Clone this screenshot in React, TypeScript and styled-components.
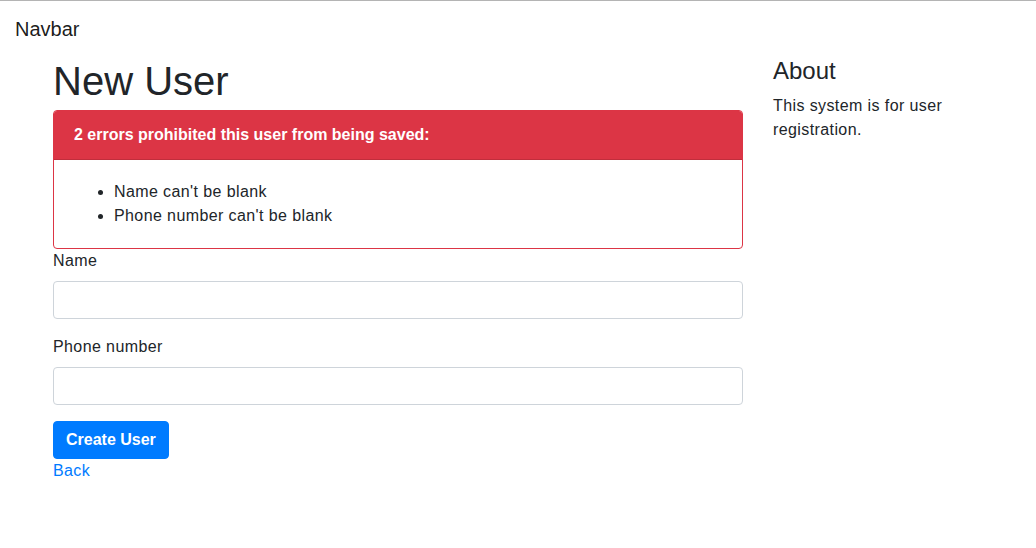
import styled, { createGlobalStyle } from 'styled-components';

const GlobalStyle = createGlobalStyle`
  *, *::before, *::after {
    box-sizing: border-box;
  }

  body {
    margin: 0;
    font-family: "Liberation Sans", Arial, sans-serif;
    font-size: 16px;
    line-height: 1.5;
    letter-spacing: 0.4px;
    color: #212529;
    background: #fff;
    border-top: 1px solid #b4b4b4;
  }
`;

const StyledNavbar = styled.nav`
  display: flex;
  align-items: center;
  padding: 8px 15px;
`;

const StyledBrand = styled.a`
  font-size: 20px;
  line-height: 30px;
  letter-spacing: 0;
  padding: 5px 0;
  color: rgba(0, 0, 0, 0.9);
  text-decoration: none;
`;

const StyledContainer = styled.main`
  max-width: 960px;
  margin: 0 auto;
  padding: 0 15px;
`;

const StyledRow = styled.div`
  display: flex;
  gap: 30px;
`;

const StyledMainColumn = styled.section`
  flex: 0 0 690px;
`;

const StyledSideColumn = styled.aside`
  flex: 0 0 210px;
`;

const StyledTitle = styled.h1`
  font-size: 40px;
  font-weight: 400;
  line-height: 1.2;
  letter-spacing: 0;
  margin: 0 0 5px;
`;

const StyledErrorCard = styled.div`
  border: 1px solid #dc3545;
  border-radius: 4px;
  overflow: hidden;
`;

const StyledErrorHeader = styled.h2`
  margin: 0;
  padding: 12px 20px;
  font-size: 16px;
  font-weight: 700;
  line-height: 24px;
  letter-spacing: 0;
  color: #fff;
  background: #dc3545;
  border-bottom: 1px solid rgba(0, 0, 0, 0.125);
`;

const StyledErrorBody = styled.div`
  padding: 20px;
`;

const StyledErrorList = styled.ul`
  margin: 0;
  padding-left: 40px;
`;

const StyledFormGroup = styled.div`
  display: flex;
  flex-direction: column;
  margin-bottom: 16px;
`;

const StyledLabel = styled.label`
  margin-bottom: 8px;
`;

const StyledInput = styled.input`
  height: 38px;
  padding: 6px 12px;
  font: inherit;
  color: #495057;
  border: 1px solid #ced4da;
  border-radius: 4px;
  background: #fff;
`;

const StyledButton = styled.button`
  align-self: flex-start;
  height: 38px;
  padding: 6px 12px;
  font-family: inherit;
  font-size: 16px;
  font-weight: 700;
  line-height: 24px;
  letter-spacing: 0;
  color: #fff;
  background: #007bff;
  border: 1px solid #007bff;
  border-radius: 4px;
`;

const StyledActions = styled.div`
  display: flex;
  flex-direction: column;
  align-items: flex-start;
`;

const StyledLink = styled.a`
  color: #007bff;
  text-decoration: none;
`;

const StyledSideTitle = styled.h4`
  font-size: 24px;
  font-weight: 400;
  line-height: 1.2;
  letter-spacing: 0;
  margin: 0 0 8px;
`;

const StyledSideText = styled.p`
  margin: 0;
`;

const errors: string[] = ["Name can't be blank", "Phone number can't be blank"];

const App = () => {
  return (
    <>
      <GlobalStyle />
      <StyledNavbar>
        <StyledBrand href="#">Navbar</StyledBrand>
      </StyledNavbar>

      <StyledContainer>
        <StyledRow>
          <StyledMainColumn>
            <StyledTitle>New User</StyledTitle>

            <StyledErrorCard>
              <StyledErrorHeader>{errors.length} errors prohibited this user from being saved:</StyledErrorHeader>
              <StyledErrorBody>
                <StyledErrorList>
                  {errors.map((e) => (
                    <li key={e}>{e}</li>
                  ))}
                </StyledErrorList>
              </StyledErrorBody>
            </StyledErrorCard>

            <form onSubmit={(ev) => ev.preventDefault()}>
              <StyledFormGroup>
                <StyledLabel htmlFor="user_name">Name</StyledLabel>
                <StyledInput id="user_name" type="text" />
              </StyledFormGroup>

              <StyledFormGroup>
                <StyledLabel htmlFor="user_phone">Phone number</StyledLabel>
                <StyledInput id="user_phone" type="text" />
              </StyledFormGroup>

              <StyledActions>
                <StyledButton type="submit">Create User</StyledButton>
                <StyledLink href="#">Back</StyledLink>
              </StyledActions>
            </form>
          </StyledMainColumn>

          <StyledSideColumn>
            <StyledSideTitle>About</StyledSideTitle>
            <StyledSideText>This system is for user registration.</StyledSideText>
          </StyledSideColumn>
        </StyledRow>
      </StyledContainer>
    </>
  );
};

export default App;
